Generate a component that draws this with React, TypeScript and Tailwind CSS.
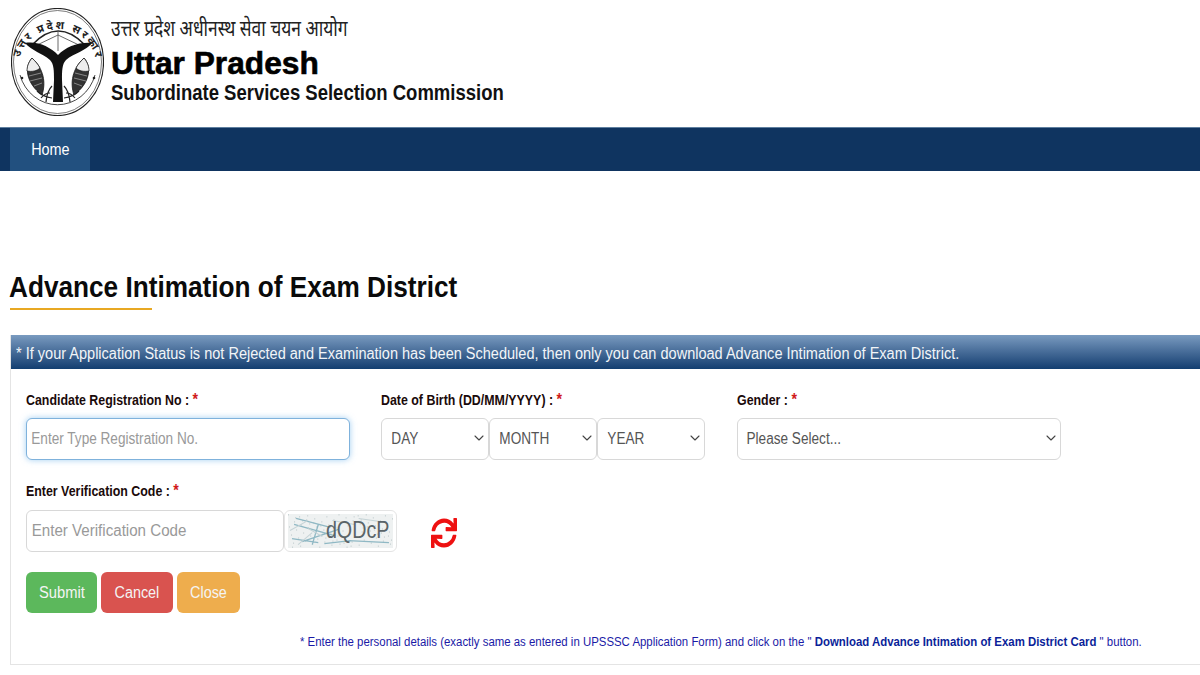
import { ChevronDown } from 'lucide-react'
import { FaSync } from 'react-icons/fa'

const fieldBox = 'relative h-[42px] rounded-[6px] border border-[#d8d8d8] bg-white overflow-hidden'
const selectClass =
  'appearance-none h-full origin-left scale-x-[.85] bg-transparent text-[16px] text-[#555555] outline-none'

// captcha speckle, fixed so the picture stays the same on each load
const speckle = Array.from({ length: 90 }, (_, i) => ({
  x: (i * 37) % 104,
  y: (i * 23) % 33,
}))

function Emblem() {
  return (
    <svg viewBox="1 3 93 108" className="w-[93px] h-[108px] shrink-0">
      <defs>
        <path id="emblem-arc" d="M 9 60 A 38.500 36 0 1 1 86 60" fill="none" />
      </defs>
      <ellipse cx="47.500" cy="57" rx="46" ry="53.500" fill="none" stroke="#222" strokeWidth="1.200" />
      <ellipse cx="47.500" cy="57" rx="44" ry="51.500" fill="none" stroke="#444" strokeWidth="0.700" />
      <path d="M10 70 A 39 41 0 0 0 85 70" fill="none" stroke="#333" strokeWidth="0.900" />
      <text fontSize="11" fontWeight="700" fill="#222" fontFamily="'Noto Sans Devanagari','Noto Sans',sans-serif">
        <textPath href="#emblem-arc" startOffset="50%" textAnchor="middle" textLength="102">
          उत्तर प्रदेश सरकार
        </textPath>
      </text>
      {/* bow */}
      <path d="M22 40 Q48 12 75 40" fill="none" stroke="#222" strokeWidth="1.500" />
      <path d="M25 41 L48 30 L71 41 M48 27 V46" fill="none" stroke="#444" strokeWidth="0.800" />
      {/* tail */}
      <path
        d="M15 38 C28 36 40 42 48 50 C56 42 68 37 82 38 C76 46 64 48 56 55 C52 59 52 66 52 75 L53 97 L43 97 L44 75 C44 66 44 59 40 55 C32 48 22 46 15 38 Z"
        fill="#111"
      />
      {/* fish */}
      <path d="M22 53 C14 62 16 78 32 90 C36 78 34 64 22 53 Z" fill="#333" stroke="#111" strokeWidth="0.800" />
      <path d="M74 53 C82 62 80 78 64 90 C60 78 62 64 74 53 Z" fill="#333" stroke="#111" strokeWidth="0.800" />
      <path d="M22 53 C18 58 17 62 17 66 C22 67 27 66 30 63 C28 59 25 56 22 53 Z" fill="#eee" stroke="#111" strokeWidth="0.700" />
      <path d="M74 53 C78 58 79 62 79 66 C74 67 69 66 66 63 C68 59 71 56 74 53 Z" fill="#eee" stroke="#111" strokeWidth="0.700" />
      <path d="M19 71 L31 68 M20 76 L32 73 M24 81 L32 78 M77 71 L65 68 M76 76 L64 73 M72 81 L64 78" stroke="#aaa" strokeWidth="0.700" />
      <path d="M36 97 Q37 86 42 81 M60 97 Q59 86 54 81 M31 93 Q35 88 40 88 M65 93 Q61 88 56 88 M27 86 Q33 92 42 93 M69 86 Q63 92 54 93" fill="none" stroke="#222" strokeWidth="1.200" />
      <circle cx="12" cy="73" r="1.300" fill="#222" />
      <circle cx="84" cy="73" r="1.300" fill="#222" />
    </svg>
  )
}

function Captcha() {
  return (
    <div className="w-[113px] h-[42px] rounded-[6px] border border-[#e4e4e4] bg-white p-[3px]">
      <div className="relative w-full h-full overflow-hidden bg-[#eef1f1]">
        <svg viewBox="0 0 104 33" className="absolute inset-0 w-full h-full">
          {speckle.map((d, i) => (
            <rect key={i} x={d.x} y={d.y} width="1" height="1" fill="#b9c6c8" />
          ))}
          <path d="M8 4 L42 13 M6 10 L46 21 M14 27 L50 15 M24 30 L30 10 M36 29 L62 26 M4 24 L30 28 M60 26 L100 28" stroke="#8fb8c4" strokeWidth="1.300" fill="none" />
          <path d="M2 16 L20 6 M10 30 L24 18 M44 6 L66 10 M70 4 L98 8 M20 14 L34 22" stroke="#c5d3d6" strokeWidth="1" fill="none" />
        </svg>
        <span className="absolute right-[4px] top-[2px] origin-right scale-x-[.82] text-[24px] leading-[28px] text-[#5a6468]">
          dQDcP
        </span>
      </div>
    </div>
  )
}

function Label({ text, className }: { text: string; className?: string }) {
  return (
    <p className={`text-[14px] leading-[20px] font-bold text-[#1a0a0a] ${className ?? ''}`}>
      <span className="inline-block origin-left scale-x-[.885] whitespace-nowrap">
        {text} <span className="text-[#d11a1a] text-[16px]">*</span>
      </span>
    </p>
  )
}

function DateSelect({ label }: { label: string }) {
  return (
    <div className={`${fieldBox} w-[108px]`}>
      <select className={`${selectClass} w-[125px] pl-[11px]`} defaultValue={label}>
        <option>{label}</option>
      </select>
      <ChevronDown className="absolute right-[1px] top-[11px] w-4 h-4 text-[#444]" strokeWidth={1.6} />
    </div>
  )
}

export default function App() {
  return (
    <div className="w-[1200px] h-[675px] overflow-hidden bg-white font-['Liberation_Sans',Arial,sans-serif] text-black">
      <header className="h-[127px] flex items-start pl-[11px] pt-[8px]">
        <Emblem />
        <div className="ml-[7px] pt-[10px] whitespace-nowrap">
          <p className="origin-left scale-x-[.79] text-[22px] leading-[26px] text-[#222] font-['Noto_Sans_Devanagari','Noto_Sans',sans-serif]">
            उत्तर प्रदेश अधीनस्थ सेवा चयन आयोग
          </p>
          <p className="origin-left scale-x-[.99] text-[32px] leading-[36px] mt-[1px] font-bold [-webkit-text-stroke:0.6px_black]">
            Uttar Pradesh
          </p>
          <p className="origin-left scale-x-[.841] text-[22px] leading-[24px] font-bold text-[#111]">
            Subordinate Services Selection Commission
          </p>
        </div>
      </header>

      <nav className="h-[44px] pl-[10px] bg-[#0f3460] border-t border-[#5f7f9f] flex">
        <a className="w-[80px] bg-[#22507f] flex items-center justify-center text-[16px] text-white">
          <span className="inline-block scale-x-[.9]">Home</span>
        </a>
      </nav>

      <h1 className="mt-[98px] ml-[9px] origin-left scale-x-[.873] whitespace-nowrap text-[30px] leading-[36px] font-bold text-[#0a0a0a]">
        Advance Intimation of Exam District
      </h1>
      <div className="mt-[3px] ml-[10px] w-[142px] h-[2px] bg-[#e8a823]" />

      <section className="mt-[25px] ml-[10px] h-[330px] border-l border-b border-[#e4e4e4]">
        <div className="h-[34px] pl-[5px] pt-[3px] flex items-center text-[16px] text-[#f2f5f8] bg-gradient-to-b from-[#7a9bc0] to-[#123e70] whitespace-nowrap">
          <span className="origin-left scale-x-[.908]">
            * If your Application Status is not Rejected and Examination has been Scheduled, then only you can download Advance Intimation of Exam District.
          </span>
        </div>

        <div className="pl-[15px] pt-[21px]">
          <div className="flex">
            <div className="w-[355px]">
              <Label text="Candidate Registration No :" />
              <div className="mt-[8px] w-[324px] h-[42px] rounded-[6px] border border-[#7fb2dc] bg-white overflow-hidden shadow-[0_0_6px_rgba(102,175,233,0.6)]">
                <input
                  className="w-[380px] h-full origin-left scale-x-[.85] pl-[5px] bg-transparent text-[16px] outline-none placeholder:text-[#999999]"
                  placeholder="Enter Type Registration No."
                />
              </div>
            </div>
            <div className="w-[356px]">
              <Label text="Date of Birth (DD/MM/YYYY) :" />
              <div className="mt-[8px] flex">
                <DateSelect label="DAY" />
                <DateSelect label="MONTH" />
                <DateSelect label="YEAR" />
              </div>
            </div>
            <div>
              <Label text="Gender :" />
              <div className={`${fieldBox} mt-[8px] w-[324px]`}>
                <select className={`${selectClass} w-[380px] pl-[10px]`} defaultValue="Please Select...">
                  <option>Please Select...</option>
                </select>
                <ChevronDown className="absolute right-[1px] top-[11px] w-4 h-4 text-[#444]" strokeWidth={1.6} />
              </div>
            </div>
          </div>

          <Label text="Enter Verification Code :" className="mt-[21px]" />
          <div className="mt-[9px] flex items-center">
            <div className={`${fieldBox} w-[258px]`}>
              <input
                className="w-[272px] h-full origin-left scale-x-[.945] pl-[5px] bg-transparent text-[16px] outline-none placeholder:text-[#999999]"
                placeholder="Enter Verification Code"
              />
            </div>
            <Captcha />
            <FaSync className="ml-[34px] mt-[4px] w-[26px] h-[26px] scale-y-[1.15] text-[#ee1111]" />
          </div>

          <div className="mt-[20px] flex gap-[4px] text-[16px] text-[#f4f4f4]">
            <button className="w-[71px] h-[41px] rounded-[6px] bg-[#5cb85c]">
              <span className="inline-block scale-x-[.92]">Submit</span>
            </button>
            <button className="w-[72px] h-[41px] rounded-[6px] bg-[#d9534f]">
              <span className="inline-block scale-x-[.9]">Cancel</span>
            </button>
            <button className="w-[63px] h-[41px] rounded-[6px] bg-[#eead4d]">
              <span className="inline-block scale-x-[.9]">Close</span>
            </button>
          </div>

          <p className="mt-[21px] ml-[274px] origin-left scale-x-[.951] text-[12px] leading-[16px] text-[#1a1aa6] whitespace-nowrap">
            * Enter the personal details (exactly same as entered in UPSSSC Application Form) and click on the "{' '}
            <b className="text-[#0b1f99]">Download Advance Intimation of Exam District Card</b> " button.
          </p>
        </div>
      </section>
    </div>
  )
}
